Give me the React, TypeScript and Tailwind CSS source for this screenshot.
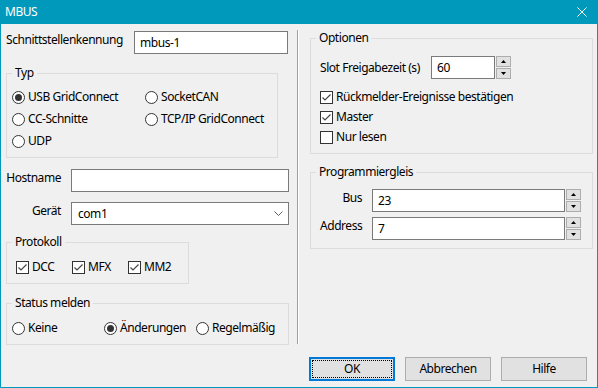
import React from "react";

function Radio({ checked, label }: { checked?: boolean; label: string }) {
  return (
    <div className="flex items-center h-[22px]">
      <span className="w-[13px] h-[13px] rounded-full border border-[#333333] bg-white flex items-center justify-center shrink-0">
        {checked && <span className="w-[7px] h-[7px] rounded-full bg-[#333333]" />}
      </span>
      <span className="ml-[3px] whitespace-nowrap">{label}</span>
    </div>
  );
}

function Check({ checked, label, h = "h-[22px]" }: { checked?: boolean; label: string; h?: string }) {
  return (
    <div className={`flex items-center ${h}`}>
      <span className="w-[13px] h-[13px] border border-[#333333] bg-white flex items-center justify-center shrink-0">
        {checked && (
          <svg width="11" height="11" viewBox="0 0 11 11">
            <path d="M1.5 5.5 L4 8 L9.5 2.5" stroke="#444" strokeWidth="1.2" fill="none" />
          </svg>
        )}
      </span>
      <span className="ml-[3px] whitespace-nowrap">{label}</span>
    </div>
  );
}

function Spin() {
  return (
    <div className="flex flex-col gap-[1px] ml-[1px]">
      <div className="w-[15px] h-[11px] bg-[#e1e1e1] border border-[#adadad] flex items-center justify-center">
        <svg width="5" height="3" viewBox="0 0 5 3">
          <polygon points="2.5,0 5,3 0,3" fill="#000" />
        </svg>
      </div>
      <div className="w-[15px] h-[11px] bg-[#e1e1e1] border border-[#adadad] flex items-center justify-center">
        <svg width="5" height="3" viewBox="0 0 5 3">
          <polygon points="0,0 5,0 2.5,3" fill="#000" />
        </svg>
      </div>
    </div>
  );
}

function Group({ title, className, children }: { title: string; className?: string; children: React.ReactNode }) {
  return (
    <fieldset className={`border border-[#dcdcdc] ${className ?? ""}`}>
      <legend className="ml-[5px] px-[3px] leading-[16px]">{title}</legend>
      {children}
    </fieldset>
  );
}

function Input({ value, w }: { value: string; w: string }) {
  return (
    <div className={`${w} h-[23px] border border-[#7a7a7a] bg-white flex items-center pl-[5px] shrink-0`}>
      {value}
    </div>
  );
}

export default function App() {
  return (
    <div className="w-[598px] h-[388px] bg-[#0099bc] flex flex-col font-['Noto_Sans',sans-serif] text-[12px] leading-[16px] tracking-[-0.45px] text-black">
      <div className="h-[24px] shrink-0 flex items-center justify-between pl-[5px] pr-[11px] text-white">
        <span>MBUS</span>
        <svg width="10" height="10" viewBox="0 0 10 10">
          <path d="M0.5 0.5 L9.5 9.5 M9.5 0.5 L0.5 9.5" stroke="white" strokeWidth="1" />
        </svg>
      </div>
      <div className="flex-1 mx-[1px] mb-[1px] bg-[#f0f0f0] flex flex-col">
        <div className="flex">
          {/* left column */}
          <div className="ml-[5px] w-[283px] pt-[7px] flex flex-col">
            <div className="flex items-start h-[23px]">
              <span className="w-[128px] pt-[1px]">Schnittstellenkennung</span>
              <Input value="mbus-1" w="w-[154px]" />
            </div>
            <Group title="Typ" className="mt-[11px] w-[272px]">
              <div className="grid grid-cols-[133px_auto] pl-[5px] pt-[5px] pb-[5px]">
                <Radio checked label="USB GridConnect" />
                <Radio label="SocketCAN" />
                <Radio label="CC-Schnitte" />
                <Radio label="TCP/IP GridConnect" />
                <Radio label="UDP" />
              </div>
            </Group>
            <div className="mt-[11px] flex items-start h-[23px]">
              <span className="w-[65px] pr-[10px] text-right pt-[1px]">Hostname</span>
              <Input value="" w="w-[218px]" />
            </div>
            <div className="mt-[10px] flex items-start h-[23px]">
              <span className="w-[65px] pr-[10px] text-right pt-[1px]">Gerät</span>
              <div className="w-[218px] h-[23px] border border-[#7a7a7a] bg-white flex items-center justify-between pl-[6px] pr-[5px]">
                <span>com1</span>
                <svg width="9" height="5" viewBox="0 0 9 5">
                  <path d="M0.5 0.5 L4.5 4.5 L8.5 0.5" stroke="#606060" strokeWidth="1" fill="none" />
                </svg>
              </div>
            </div>
            <Group title="Protokoll" className="mt-[9px] w-[183px]">
              <div className="flex pl-[9px] pt-[6px] pb-[5px]">
                <div className="w-[56px]"><Check checked label="DCC" /></div>
                <div className="w-[56px]"><Check checked label="MFX" /></div>
                <Check checked label="MM2" />
              </div>
            </Group>
            <Group title="Status melden" className="mt-[11px] w-[283px]">
              <div className="grid grid-cols-[92px_92px_auto] pl-[5px] pt-[6px] pb-[5px]">
                <Radio label="Keine" />
                <Radio checked label="Änderungen" />
                <Radio label="Regelmäßig" />
              </div>
            </Group>
          </div>
          {/* separator */}
          <div className="ml-[8px] mt-[6px] h-[314px] w-[2px] border-l border-r border-l-[#a0a0a0] border-r-white" />
          {/* right column */}
          <div className="ml-[11px] w-[283px] pt-[6px] flex flex-col">
            <Group title="Optionen" className="w-[283px]">
              <div className="pl-[9px] pt-[10px] pb-[6px] flex flex-col">
                <div className="flex items-center h-[23px]">
                  <span className="w-[111px]">Slot Freigabezeit (s)</span>
                  <Input value="60" w="w-[64px]" />
                  <Spin />
                </div>
                <div className="mt-[8px] flex flex-col">
                  <Check checked label="Rückmelder-Ereignisse bestätigen" h="h-[20px]" />
                  <Check checked label="Master" h="h-[20px]" />
                  <Check label="Nur lesen" h="h-[20px]" />
                </div>
              </div>
            </Group>
            <Group title="Programmiergleis" className="mt-[10px] w-[283px]">
              <div className="pl-[9px] pt-[9px] pb-[8px] flex flex-col">
                <div className="flex items-start h-[23px]">
                  <span className="w-[52px] pr-[10px] text-right pt-[1px]">Bus</span>
                  <Input value="23" w="w-[193px]" />
                  <Spin />
                </div>
                <div className="mt-[5px] flex items-start h-[23px]">
                  <span className="w-[52px] pr-[10px] text-right pt-[1px]">Address</span>
                  <Input value="7" w="w-[193px]" />
                  <Spin />
                </div>
              </div>
            </Group>
          </div>
        </div>
        {/* footer */}
        <div className="mt-auto flex justify-end gap-[10px] pr-[10px] pb-[6px]">
          <button className="w-[86px] h-[24px] border-2 border-[#0078d7] bg-[#e1e1e1] p-[1px]">
            <div className="w-full h-full border border-dotted border-black flex items-center justify-center">OK</div>
          </button>
          <button className="w-[86px] h-[24px] border border-[#adadad] bg-[#e1e1e1] flex items-center justify-center">Abbrechen</button>
          <button className="w-[86px] h-[24px] border border-[#adadad] bg-[#e1e1e1] flex items-center justify-center">Hilfe</button>
        </div>
      </div>
    </div>
  );
}
